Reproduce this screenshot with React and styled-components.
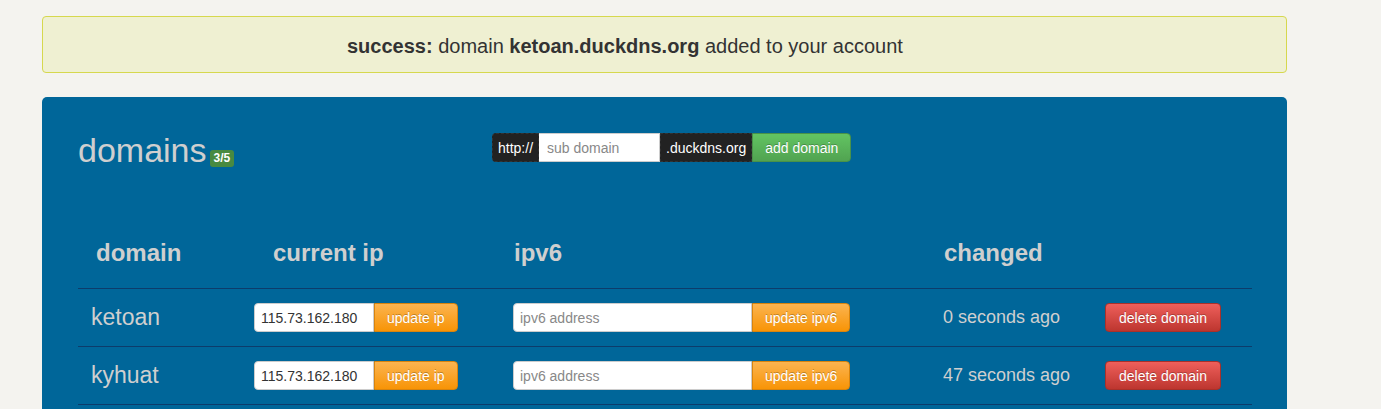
import React from "react";
import styled, { createGlobalStyle } from "styled-components";

const GlobalStyle = createGlobalStyle`
  html, body {
    margin: 0;
    padding: 0;
    background: #f4f3ef;
    font-family: "Liberation Sans", Arial, sans-serif;
  }
`;

const domains = [
  { name: "ketoan", ip: "115.73.162.180", changed: "0 seconds ago" },
  { name: "kyhuat", ip: "115.73.162.180", changed: "47 seconds ago" },
];

const columns = "168px 259px 430px 162px 1fr";

function App() {
  return (
    <>
      <GlobalStyle />
      <Page>
        <Alert>
          <b>success:</b> domain <b>ketoan.duckdns.org</b> added to your account
        </Alert>
        <Panel>
          <TopBar>
            <Title>
              domains<Badge>3/5</Badge>
            </Title>
            <AddForm>
              <AddOn left>http://</AddOn>
              <SubInput placeholder="sub domain" />
              <AddOn>.duckdns.org</AddOn>
              <Btn kind="success" last>
                add domain
              </Btn>
            </AddForm>
          </TopBar>
          <Table>
            <HeadRow>
              <Th pad={18}>domain</Th>
              <Th pad={27}>current ip</Th>
              <Th pad={9}>ipv6</Th>
              <Th pad={9}>changed</Th>
              <Th />
            </HeadRow>
            {domains.map((d) => (
              <Row key={d.name}>
                <DomainCell>{d.name}</DomainCell>
                <Cell>
                  <Group>
                    <Field width={120} defaultValue={d.ip} />
                    <Btn kind="warning" last>
                      update ip
                    </Btn>
                  </Group>
                </Cell>
                <Cell>
                  <Group>
                    <Field width={239} placeholder="ipv6 address" />
                    <Btn kind="warning" last>
                      update ipv6
                    </Btn>
                  </Group>
                </Cell>
                <ChangedCell>{d.changed}</ChangedCell>
                <Cell>
                  <Btn kind="danger" solo>
                    delete domain
                  </Btn>
                </Cell>
              </Row>
            ))}
          </Table>
        </Panel>
      </Page>
    </>
  );
}

const gradients = {
  success: ["#62c462", "#51a351", "#499249"],
  warning: ["#fbb450", "#f89406", "#d9840d"],
  danger: ["#ee5f5b", "#bd362f", "#a9302a"],
};

const Page = styled.div`
  width: 1245px;
  margin-left: 42px;
  padding-top: 16px;
`;

const Alert = styled.div`
  box-sizing: border-box;
  height: 57px;
  padding-left: 304px;
  line-height: 58px;
  background: #eff0d2;
  border: 1px solid #d6d84e;
  border-radius: 4px;
  color: #333;
  font-size: 20px;

  b {
    font-weight: bold;
  }
`;

const Panel = styled.div`
  margin-top: 24px;
  height: 330px;
  padding: 0 35px 0 36px;
  background: #006699;
  border-radius: 5px 5px 0 0;
  overflow: hidden;
`;

const TopBar = styled.div`
  box-sizing: border-box;
  display: flex;
  align-items: flex-start;
  padding-top: 36px;
  height: 132px;
`;

const Title = styled.div`
  width: 414px;
  color: #cfcfcf;
  font-size: 34px;
  line-height: 34px;
`;

const Badge = styled.span`
  display: inline-block;
  margin-left: 3px;
  padding: 0 4px;
  height: 17px;
  line-height: 17px;
  font-size: 12px;
  font-weight: bold;
  color: #fff;
  background: #488a40;
  border-radius: 3px;
  vertical-align: 0;
`;

const AddForm = styled.div`
  display: flex;
  height: 29px;
`;

const AddOn = styled.span`
  box-sizing: border-box;
  display: flex;
  align-items: center;
  padding: 0 5px;
  height: 29px;
  background: #222;
  color: #fff;
  font-size: 14px;
  border: 1px dashed #333;
  border-radius: ${(p) => (p.left ? "4px 0 0 4px" : "0")};
`;

const SubInput = styled.input`
  box-sizing: border-box;
  width: 121px;
  height: 29px;
  border: 1px solid #ccc;
  border-left: 0;
  padding: 0 8px;
  font: 14px "Liberation Sans", Arial, sans-serif;
  outline: none;

  &::placeholder {
    color: #888;
  }
`;

const Btn = styled.button`
  box-sizing: border-box;
  height: 29px;
  padding: 0 ${(p) => (p.kind === "danger" ? 13 : 12)}px;
  font: 14px "Liberation Sans", Arial, sans-serif;
  color: #fff;
  text-shadow: 0 -1px 0 rgba(0, 0, 0, 0.25);
  border: 1px solid ${(p) => gradients[p.kind][2]};
  background: linear-gradient(
    to bottom,
    ${(p) => gradients[p.kind][0]},
    ${(p) => gradients[p.kind][1]}
  );
  border-radius: ${(p) => (p.solo ? "4px" : p.last ? "0 4px 4px 0" : "0")};
  white-space: nowrap;
  cursor: pointer;
`;

const Table = styled.div`
  display: flex;
  flex-direction: column;
`;

const HeadRow = styled.div`
  display: grid;
  grid-template-columns: ${columns};
  height: 60px;
  box-sizing: border-box;
  border-bottom: 1px solid #0d3c6b;
`;

const Th = styled.div`
  padding-left: ${(p) => p.pad || 0}px;
  padding-top: 10px;
  color: #cfcfcf;
  font-size: 24px;
  font-weight: bold;
`;

const Row = styled.div`
  display: grid;
  grid-template-columns: ${columns};
  align-items: center;
  height: 58px;
  box-sizing: border-box;
  border-bottom: 1px solid #0d3c6b;
`;

const Cell = styled.div`
  padding-left: 8px;
  display: flex;
  align-items: center;
`;

const DomainCell = styled.div`
  padding-left: 13px;
  color: #cfcfcf;
  font-size: 23px;
`;

const ChangedCell = styled.div`
  padding-left: 8px;
  color: #cfcfcf;
  font-size: 18px;
`;

const Group = styled.div`
  display: flex;
`;

const Field = styled.input`
  box-sizing: border-box;
  width: ${(p) => p.width}px;
  height: 29px;
  padding: 0 6px;
  border: 1px solid #ccc;
  border-radius: 4px 0 0 4px;
  font: 14px "Liberation Sans", Arial, sans-serif;
  color: #333;
  outline: none;

  &::placeholder {
    color: #888;
  }
`;

export default App;
